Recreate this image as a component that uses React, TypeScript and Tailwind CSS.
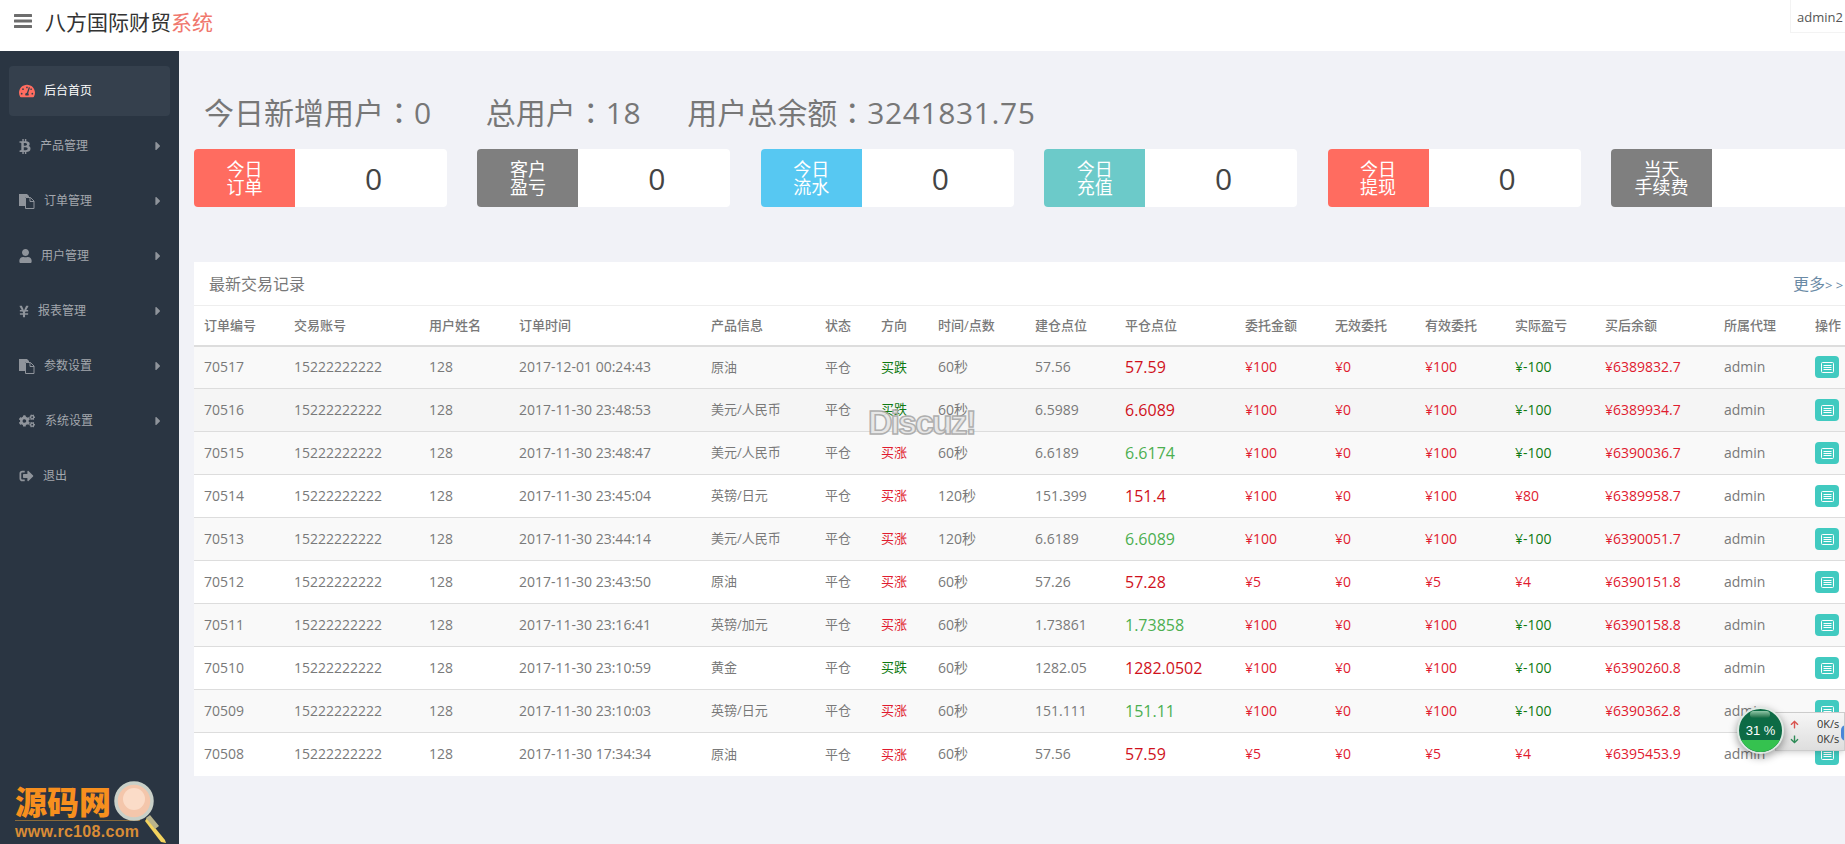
import type { ComponentType } from "react"
import {
  FaArrowDown,
  FaArrowUp,
  FaBtc,
  FaCaretRight,
  FaCogs,
  FaSignOutAlt,
  FaTachometerAlt,
  FaUser,
  FaYenSign,
} from "react-icons/fa"

// font awesome 4 "files-o": the newer sets dropped the solid back sheet
function FilesIcon({ className }: { className?: string }) {
  return (
    <svg className={className} viewBox="0 0 16 15" fill="none">
      <path d="M0 0h8l2 2v1H6v9H0z" fill="currentColor" />
      <path d="M6.5 3.5h5l3.5 3.5v7.500H6.500z" stroke="currentColor" />
      <path d="M11 3.500V7.500h4" stroke="currentColor" />
    </svg>
  )
}

const menu: { label: string; icon: ComponentType<{ className?: string }>; size: string; gap: string }[] = [
  { label: "产品管理", icon: FaBtc, size: "h-[15px] w-3", gap: "ml-[9px]" },
  { label: "订单管理", icon: FilesIcon, size: "h-[15px] w-4", gap: "ml-[9px]" },
  { label: "用户管理", icon: FaUser, size: "h-[14px] w-[13px]", gap: "ml-[9px]" },
  { label: "报表管理", icon: FaYenSign, size: "h-[15px] w-[10px]", gap: "ml-[9px]" },
  { label: "参数设置", icon: FilesIcon, size: "h-[15px] w-4", gap: "ml-[9px]" },
  { label: "系统设置", icon: FaCogs, size: "h-[14px] w-4", gap: "ml-[10px]" },
]

const stats = [
  { label: ["今日", "订单"], value: "0", tone: "bg-[#ff6c60]" },
  { label: ["客户", "盈亏"], value: "0", tone: "bg-[#7f7f7f]" },
  { label: ["今日", "流水"], value: "0", tone: "bg-[#57c8f2]" },
  { label: ["今日", "充值"], value: "0", tone: "bg-[#6ccac9]" },
  { label: ["今日", "提现"], value: "0", tone: "bg-[#ff6c60]" },
  { label: ["当天", "手续费"], value: "", tone: "bg-[#7f7f7f]" },
]

const columns = [
  ["订单编号", "w-[90px]"],
  ["交易账号", "w-[135px]"],
  ["用户姓名", "w-[90px]"],
  ["订单时间", "w-[192px]"],
  ["产品信息", "w-[114px]"],
  ["状态", "w-[56px]"],
  ["方向", "w-[57px]"],
  ["时间/点数", "w-[97px]"],
  ["建仓点位", "w-[90px]"],
  ["平仓点位", "w-[120px]"],
  ["委托金额", "w-[90px]"],
  ["无效委托", "w-[90px]"],
  ["有效委托", "w-[90px]"],
  ["实际盈亏", "w-[90px]"],
  ["买后余额", "w-[119px]"],
  ["所属代理", "w-[91px]"],
  ["操作", "w-[40px]"],
]

type Order = {
  id: string
  time: string
  product: string
  up: boolean
  period: string
  open: string
  close: string
  win: boolean
  amount: string
  profit: string
  balance: string
}

const orders: Order[] = [
  { id: "70517", time: "2017-12-01 00:24:43", product: "原油", up: false, period: "60秒", open: "57.56", close: "57.59", win: true, amount: "100", profit: "-100", balance: "6389832.7" },
  { id: "70516", time: "2017-11-30 23:48:53", product: "美元/人民币", up: false, period: "60秒", open: "6.5989", close: "6.6089", win: true, amount: "100", profit: "-100", balance: "6389934.7" },
  { id: "70515", time: "2017-11-30 23:48:47", product: "美元/人民币", up: true, period: "60秒", open: "6.6189", close: "6.6174", win: false, amount: "100", profit: "-100", balance: "6390036.7" },
  { id: "70514", time: "2017-11-30 23:45:04", product: "英镑/日元", up: true, period: "120秒", open: "151.399", close: "151.4", win: true, amount: "100", profit: "80", balance: "6389958.7" },
  { id: "70513", time: "2017-11-30 23:44:14", product: "美元/人民币", up: true, period: "120秒", open: "6.6189", close: "6.6089", win: false, amount: "100", profit: "-100", balance: "6390051.7" },
  { id: "70512", time: "2017-11-30 23:43:50", product: "原油", up: true, period: "60秒", open: "57.26", close: "57.28", win: true, amount: "5", profit: "4", balance: "6390151.8" },
  { id: "70511", time: "2017-11-30 23:16:41", product: "英镑/加元", up: true, period: "60秒", open: "1.73861", close: "1.73858", win: false, amount: "100", profit: "-100", balance: "6390158.8" },
  { id: "70510", time: "2017-11-30 23:10:59", product: "黄金", up: false, period: "60秒", open: "1282.05", close: "1282.0502", win: true, amount: "100", profit: "-100", balance: "6390260.8" },
  { id: "70509", time: "2017-11-30 23:10:03", product: "英镑/日元", up: true, period: "60秒", open: "151.111", close: "151.11", win: false, amount: "100", profit: "-100", balance: "6390362.8" },
  { id: "70508", time: "2017-11-30 17:34:34", product: "原油", up: true, period: "60秒", open: "57.56", close: "57.59", win: true, amount: "5", profit: "4", balance: "6395453.9" },
]

function Colon() {
  return <span className="font-['Noto_Sans_CJK_TC',sans-serif]">：</span>
}

function Sidebar() {
  return (
    <aside className="relative w-[179px] shrink-0 bg-[#2a3542] pt-[15px] text-xs text-[#a3a7ad]">
      <div className="mx-[9px] flex h-[50px] items-center gap-[9px] rounded bg-[#35404d] pl-[10px] text-white">
        <FaTachometerAlt className="h-4 w-4 text-[#ff6c60]" />
        <span>后台首页</span>
      </div>
      {menu.map((item) => (
        <div key={item.label} className="mt-[5px] flex h-[50px] items-center pl-[19px] pr-[18px]">
          <item.icon className={`shrink-0 text-[#8f949b] ${item.size}`} />
          <span className={item.gap}>{item.label}</span>
          <FaCaretRight className="ml-auto h-[14px] w-[6px] text-[#8f949b]" />
        </div>
      ))}
      <div className="mt-[5px] flex h-[50px] items-center gap-[9px] pl-[19px]">
        <FaSignOutAlt className="h-[14px] w-[15px] text-[#8f949b]" />
        <span>退出</span>
      </div>
      <SourceLogo />
    </aside>
  )
}

function SourceLogo() {
  return (
    <div className="absolute bottom-0 left-[15px] h-[60px] w-[155px]">
      <div className="text-[32px] font-black leading-[36px] text-[#f78f1e]">源码网</div>
      <div className="w-[125px] border-t border-[#8a6a3a] font-['Liberation_Sans',sans-serif] text-[16px] font-bold leading-[21px] tracking-[0.3px] text-[#d98c36]">
        www.rc108.com
      </div>
      <svg className="absolute left-[98px] top-[-4px]" width="56" height="66" viewBox="0 0 56 66">
        <path d="M34 38l18 22 1 3-5-1-16-21z" fill="#f3d35e" />
        <path d="M33 38l9 11 4-3-9-11z" fill="#b9b38c" />
        <circle cx="21" cy="21" r="18" fill="#f4c6ab" stroke="#c9d0c8" strokeWidth="3.500" />
        <circle cx="21" cy="19" r="11" fill="#fbdcc8" />
      </svg>
    </div>
  )
}

function StatCard({ stat }: { stat: (typeof stats)[number] }) {
  return (
    <div className="flex h-[58px] w-[253px] shrink-0 overflow-hidden rounded bg-white">
      <div className={`flex w-[101px] flex-col items-center justify-center text-[18px] leading-[18px] text-white ${stat.tone}`}>
        <span>{stat.label[0]}</span>
        <span>{stat.label[1]}</span>
      </div>
      <div className="flex flex-1 items-center justify-center pl-[5px] text-[30px] text-[#444]">{stat.value}</div>
    </div>
  )
}

function OrderRow({ order, index }: { order: Order; index: number }) {
  const red = "text-[#e01b2f]"
  const green = "text-[#0f7a12]"
  const tint = index % 2 === 0 ? "bg-[#f9f9f9]" : index === 1 ? "bg-[#f5f5f5]" : "bg-white"
  // Latin cells sit a pixel lower than the CJK ones without this
  const cell = "pb-[2px] pl-[10px]"
  return (
    <tr className={`h-[43px] border-t border-[#ddd] ${tint}`}>
      <td className={cell}>{order.id}</td>
      <td className={cell}>15222222222</td>
      <td className={cell}>128</td>
      <td className={cell}>{order.time}</td>
      <td className="pl-[10px] text-[13px]">{order.product}</td>
      <td className="pl-[10px] text-[13px]">平仓</td>
      <td className={`pl-[10px] text-[13px] ${order.up ? red : green}`}>{order.up ? "买涨" : "买跌"}</td>
      <td className={cell}>{order.period}</td>
      <td className={cell}>{order.open}</td>
      <td className={`pl-[10px] text-[16px] ${order.win ? "text-[#d0111b]" : "text-[#4caf50]"}`}>{order.close}</td>
      <td className={`${cell} ${red}`}>¥{order.amount}</td>
      <td className={`${cell} ${red}`}>¥0</td>
      <td className={`${cell} ${red}`}>¥{order.amount}</td>
      <td className={`${cell} ${order.profit.startsWith("-") ? green : red}`}>¥{order.profit}</td>
      <td className={`${cell} ${red}`}>¥{order.balance}</td>
      <td className={cell}>admin</td>
      <td className="pl-[10px]">
        <button className="flex h-[22px] w-6 items-center justify-center rounded bg-[#41cac0]">
          <svg width="13" height="11" viewBox="0 0 13 11" fill="none" stroke="white">
            <rect x="0.5" y="0.5" width="12" height="10" rx="1" />
            <path d="M2.500 3.500h8M2.500 5.500h8M2.500 7.500h8" />
          </svg>
        </button>
      </td>
    </tr>
  )
}

function NetWidget() {
  return (
    <div className="absolute left-[1737px] top-[707px] h-[47px] w-[108px]">
      <div className="absolute left-[38px] top-[5px] h-[39px] w-[70px] overflow-hidden border border-[#ccc] bg-gradient-to-b from-[#f6f6f6] to-[#dedede] shadow-md">
        <FaArrowUp className="absolute left-[14px] top-[7px] h-[9px] w-[9px] text-[#d9534f]" />
        <FaArrowDown className="absolute left-[14px] top-[22px] h-[9px] w-[9px] text-[#2e8b57]" />
        <span className="absolute left-[41px] top-[4px] text-[11px] leading-[14px] text-[#333]">0K/s</span>
        <span className="absolute left-[41px] top-[19px] text-[11px] leading-[14px] text-[#333]">0K/s</span>
        <span className="absolute left-[65px] top-[12px] h-[16px] w-[10px] rounded-full bg-[#4a86d8]" />
      </div>
      <div className="absolute left-0 top-0 flex h-[47px] w-[47px] items-center justify-center overflow-hidden rounded-full border-2 border-[#dfe9e3] bg-[#0d6b45] font-['Liberation_Sans',sans-serif] text-[13px] text-white shadow-[0_3px_8px_rgba(0,0,0,0.4)]">
        <span className="absolute inset-x-0 bottom-0 h-[12px] bg-[#35c24f]" />
        <span className="absolute left-[11px] top-[2px] h-[7px] w-[20px] rounded-full bg-gradient-to-b from-[#8fc7a8] to-[#0d6b45]" />
        <span className="relative">31 %</span>
      </div>
    </div>
  )
}

export default function App() {
  return (
    <div className="relative flex h-screen w-full flex-col overflow-hidden bg-[#f1f2f7] font-['Open_Sans','Noto_Sans_CJK_SC',sans-serif] text-[#797979]">
      <header className="flex h-[51px] shrink-0 items-start bg-white">
        <svg className="ml-[14px] mt-[14px] text-[#6d6d6d]" width="18" height="14" viewBox="0 0 18 14" fill="currentColor">
          <rect width="18" height="3" rx="0.5" />
          <rect y="5.500" width="18" height="3" rx="0.5" />
          <rect y="11" width="18" height="3" rx="0.5" />
        </svg>
        <div className="ml-[13px] mt-[7px] text-[21px] leading-[30px] text-[#333]">
          八方国际财贸<span className="text-[#f0786e]">系统</span>
        </div>
        <div className="ml-auto h-[33px] w-[55px] border-b border-l border-[#f3f3f3] pl-[6px] text-[13px] leading-[34px] text-[#555]">admin2</div>
      </header>

      <div className="flex min-h-0 flex-1">
        <Sidebar />
        <main className="min-w-0 flex-1 pl-[15px]">
          <h1 className="ml-[10px] mt-[42px] flex h-[37px] items-center text-[30px] font-normal leading-[37px] text-[#777]">
            <span>今日新增用户<Colon /><span className="tracking-[0.6px]">0</span></span>
            <span className="ml-[54px]">总用户<Colon /><span className="tracking-[0.6px]">18</span></span>
            <span className="ml-[46px]">用户总余额<Colon /><span className="tracking-[0.6px]">3241831.75</span></span>
          </h1>
          <div className="mt-[19px] flex gap-[30.4px]">
            {stats.map((stat) => (
              <StatCard key={stat.label.join("")} stat={stat} />
            ))}
          </div>

          <section className="mt-[55px] bg-white text-[14px]">
            <div className="flex h-[43px] items-center justify-between whitespace-nowrap pl-[15px] text-[16px]">
              <span>最新交易记录</span>
              <span className="w-[52px] text-[#6a8aa5]">更多<span className="text-[13px]">&gt; &gt;</span></span>
            </div>
            <table className="w-[1651px] table-fixed border-collapse whitespace-nowrap">
              <colgroup>
                {columns.map(([title, width]) => (
                  <col key={title} className={width} />
                ))}
              </colgroup>
              <thead>
                <tr className="h-[40px] border-t border-b-2 border-[#eee] border-b-[#ddd] text-left">
                  {columns.map(([title]) => (
                    <th key={title} className="pl-[10px] text-[13px] font-medium">
                      {title}
                    </th>
                  ))}
                </tr>
              </thead>
              <tbody>
                {orders.map((order, i) => (
                  <OrderRow key={order.id} order={order} index={i} />
                ))}
              </tbody>
            </table>
          </section>
        </main>
      </div>

      <div className="absolute left-[868px] top-[403px] font-['Liberation_Sans',sans-serif] text-[34px] font-bold leading-[38px] tracking-[-2px] text-[#e6e6e6] opacity-90 [-webkit-text-stroke:1.5px_#a8a8a8]">
        Discuz!
      </div>
      <NetWidget />
    </div>
  )
}
